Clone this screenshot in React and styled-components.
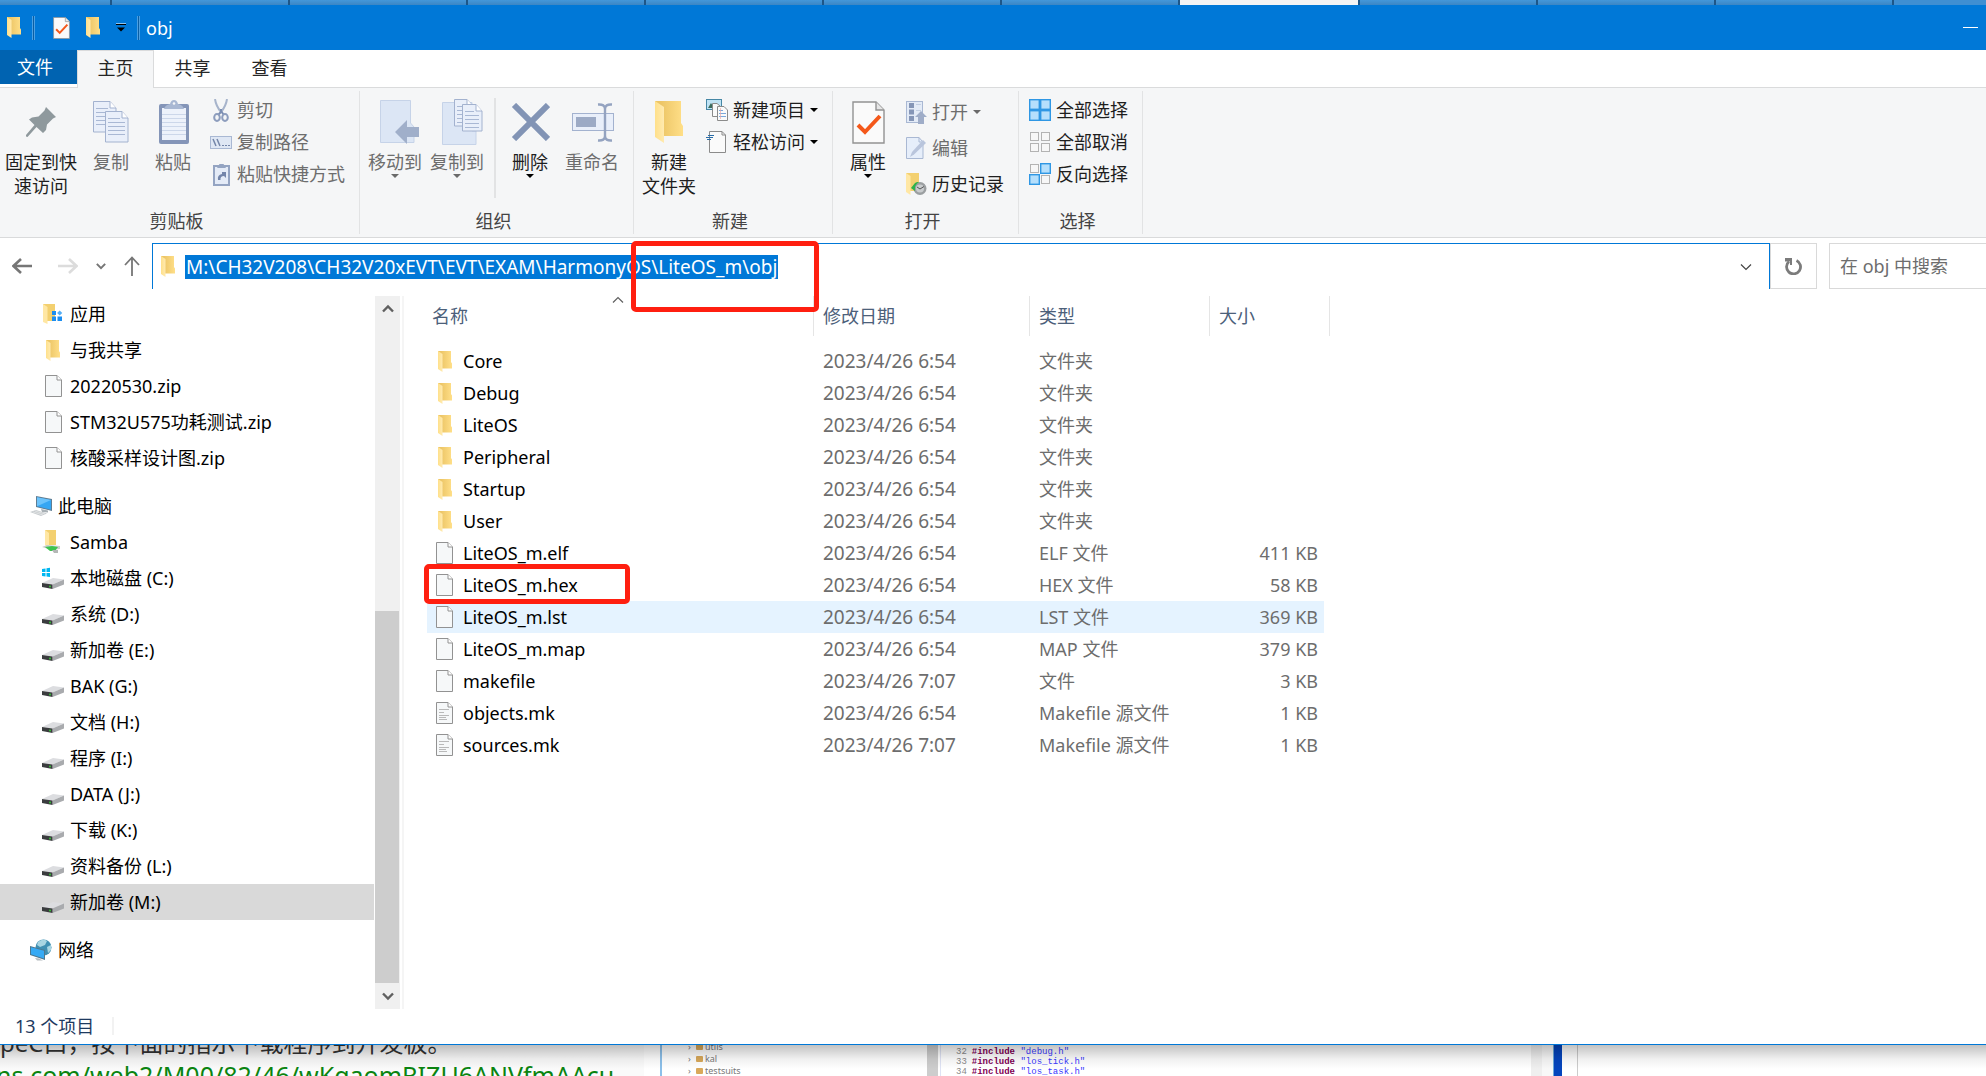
import React, { useState } from "react";
import styled, { createGlobalStyle } from "styled-components";

const GlobalStyle = createGlobalStyle`
  * {
    box-sizing: border-box;
  }
  body {
    margin: 0;
    font-family: "Noto Sans", "Noto Sans CJK SC", sans-serif;
    font-size: 18px;
    line-height: 24px;
    color: #000;
  }
  button, input {
    font: inherit;
    color: inherit;
    border: none;
    padding: 0;
    margin: 0;
    background: none;
  }
  svg {
    display: block;
    flex: none;
  }
`;

/* ---------- icons ---------- */

const FolderIcon = ({ size = 14 }) => (
  <svg width={size} height={size * 1.5} viewBox="0 0 28 42">
    <defs>
      <linearGradient id="folderBack" x1="0" x2="1">
        <stop offset="0.2" stopColor="#ecc566" />
        <stop offset="1" stopColor="#ffdf88" />
      </linearGradient>
      <linearGradient id="folderLeaf" x1="0" x2="1">
        <stop offset="0" stopColor="#ffe08a" />
        <stop offset="1" stopColor="#ffeab0" />
      </linearGradient>
    </defs>
    <path d="M0 0H26V22L28 25V35H4Z" fill="url(#folderBack)" />
    <path d="M0 0L9 6V42L0 36Z" fill="url(#folderLeaf)" />
  </svg>
);

const FileIcon = ({ lines }) => (
  <svg width="17" height="22" viewBox="0 0 17 22">
    <path d="M.5 .5H12L16.500 5V21.500H.5Z" fill="#f6f8f9" stroke="#929292" />
    <path d="M12 .5V5H16.500" fill="#fff" stroke="#929292" />
    {lines && (
      <path d="M3 7.500H13M3 10.500H8M3 13.500H13M3 15.500H10M3 17.500H11" stroke="#b9b9b9" />
    )}
  </svg>
);

const CheckDocIcon = ({ size = 17 }) => (
  <svg width={size} height={Math.round(size * 1.3)} viewBox="0 0 33 43">
    <path d="M1 1H24L32 9V42H1Z" fill="#fafafa" stroke="#929292" strokeWidth="1.400" />
    <path d="M24 1V9H32" fill="#e6e6e6" stroke="#929292" strokeWidth="1.400" />
    <path d="M6 24L13 31L28 15" fill="none" stroke="#f4581a" strokeWidth="4" />
  </svg>
);

const DriveIcon = ({ system }) => (
  <svg width="22" height="22" viewBox="0 0 22 22">
    <path d="M0 16L11 11L22 12.500L10.500 17.500Z" fill="#dcdde0" />
    <path d="M10.500 17.500L22 12.500V17.500L10.500 22Z" fill="#a9abae" />
    <path d="M0 16L10.500 17.500V22L0 20Z" fill="#3a3c3e" />
    <circle cx="8" cy="19.500" r="1" fill="#35c435" />
    {system && (
      <path d="M0 2L3.500 1.500V5H0ZM4.500 1.300L8 .8V5H4.500ZM0 6H3.500V9.400L0 9ZM4.500 6H8V10L4.500 9.500Z" fill="#00b7f1" />
    )}
  </svg>
);

const AppFolderIcon = () => (
  <svg width="20" height="20" viewBox="0 0 20 20">
    <path d="M0 0H12V17H2Z" fill="#f3d070" />
    <path d="M0 0L4.500 3V20L0 18Z" fill="#ffe7a4" />
    <path d="M9 7H13V11H9ZM9 12.500H13V17H9ZM14.500 12.500H19V17H14.500Z" fill="#1b8df0" />
    <path d="M16.700 6.400L19.300 9L16.700 11.600L14.100 9Z" fill="#55aef5" />
  </svg>
);

const NetFolderIcon = () => (
  <svg width="22" height="24" viewBox="0 0 22 24">
    <path d="M3 0H14V15H5Z" fill="#f3d070" />
    <path d="M3 0L7 3V18L3 15Z" fill="#ffe7a4" />
    <path d="M0 17L5 15L18 16V19L10 20Z" fill="#c9ccca" />
    <path d="M3 17L10 16L16 17L13 21L8 21Z" fill="#3cc450" />
    <path d="M10 20L16 20V23H12Z" fill="#b4b8b6" />
  </svg>
);

const ComputerIcon = () => (
  <svg width="22" height="22" viewBox="0 0 22 22">
    <path d="M6 1L22 4V16L6 12Z" fill="#5f7d93" />
    <path d="M7 2.200L21 5V14.700L7 11.200Z" fill="#35a6f3" />
    <path d="M7 2.200L21 5L7 11.200Z" fill="#6cc3fb" />
    <path d="M11 14L18 15.500V17.500L12 17Z" fill="#a8b0b5" />
    <path d="M0 17L6 15L17 18.500L11 21Z" fill="#c6cbce" />
    <path d="M3 17L13 20M5 16L15 19" stroke="#f2f2f2" strokeWidth=".6" />
  </svg>
);

const NetworkIcon = () => (
  <svg width="22" height="22" viewBox="0 0 22 22">
    <circle cx="13.500" cy="8.500" r="8" fill="#3f8fb2" />
    <path d="M8 3Q13 -1 17 2L15 6L10 8L7 6ZM17 8L21 6L21 11L18 14Z" fill="#a8d5e2" />
    <path d="M0 7L15 11V21L0 16Z" fill="#4d7890" />
    <path d="M1 8.200L14 11.800V19.600L1 15.300Z" fill="#36aaf5" />
    <path d="M5 19L9 19.500L13 21.500H7Z" fill="#b5bcc0" />
  </svg>
);

const PinIcon = () => (
  <svg width="30" height="30" viewBox="0 0 30 30">
    <path d="M20 0L30 10L27 11.500L21 17.500L20 23L17 26L10.500 20L1.500 30L0 29.500L0 28L8.500 18L3 12.500L6 10.500L12.500 9.500L18.500 3.500Z" fill="#8f999d" />
  </svg>
);

const Sheet = ({ x, y, w = 23, h = 31 }) => (
  <g transform={`translate(${x} ${y})`}>
    <path d={`M.5 .5H${w - 6}L${w} 7V${h}H.5Z`} fill="#e9effa" stroke="#a3b2cf" />
    <path d={`M${w - 6} .5V7H${w}`} fill="#fff" stroke="#a3b2cf" />
    <path
      d={`M3 7.500H${w - 8}M3 11.500H${w - 3}M3 15.500H${w - 3}M3 19.500H${w - 3}M3 23.500H${w - 3}`}
      stroke="#a9b8d4"
    />
  </g>
);

const CopyIcon = () => (
  <svg width="38" height="43" viewBox="-1 0 38 43">
    <Sheet x={0} y={0} />
    <Sheet x={12} y={10} />
  </svg>
);

const PasteIcon = () => (
  <svg width="32" height="44" viewBox="-2 0 32 44">
    <rect y="4" width="30" height="40" rx="2" fill="#8495b8" />
    <rect x="3" y="8" width="24" height="32" fill="#edf2fb" />
    <path d="M3 14.500H27M3 18.500H27M3 22.500H27M3 26.500H27M3 30.500H27M3 34.500H27" stroke="#ccd7ea" />
    <path d="M5 9Q6 5 11 4Q12 0 15 0T19 4Q24 5 25 9Z" fill="#a9b8d3" />
    <circle cx="15" cy="3.500" r="1.300" fill="#f5f6f8" />
  </svg>
);

const CutIcon = () => (
  <svg width="16" height="23" viewBox="0 0 16 23">
    <path d="M2 0Q3 7 8 13Q13 7 14 0" fill="none" stroke="#a7b4cb" strokeWidth="2" />
    <path d="M8 10V13L5 16M8 12L11 16" fill="none" stroke="#7d8fb3" strokeWidth="2" />
    <ellipse cx="4" cy="18.500" rx="2.800" ry="3.400" fill="none" stroke="#8d9dbd" strokeWidth="2" />
    <ellipse cx="12" cy="18.500" rx="2.800" ry="3.400" fill="none" stroke="#8d9dbd" strokeWidth="2" />
  </svg>
);

const PathIcon = () => (
  <svg width="22" height="13" viewBox="0 0 22 13">
    <rect x=".5" y=".5" width="21" height="12" fill="#dfe7f4" stroke="#a9b8d3" />
    <path d="M3 3L6 10M7 3L10 10" stroke="#7485a8" strokeWidth="1.500" />
    <path d="M12 9.500H14M15 9.500H17M18 9.500H20" stroke="#7485a8" />
  </svg>
);

const PasteLinkIcon = () => (
  <svg width="17" height="23" viewBox="0 0 17 23">
    <rect x="1" y="3" width="15" height="19" fill="#e4ebf7" stroke="#94a4c2" strokeWidth="2" />
    <path d="M4 5L6.500 1H10.500L13 5Z" fill="#94a4c2" />
    <path d="M5 17Q4 12 9 11V9H13V15L11 13Q7 13 7.500 17Z" fill="#7385aa" />
  </svg>
);

const MoveToIcon = () => (
  <svg width="47" height="44" viewBox="-8 0 47 44">
    <path d="M.5 .5H30.500V23L34 27V42.500H.5Z" fill="#dce6f5" stroke="#c6d3e8" />
    <path d="M15 32L27 20V27H39V37H27V44Z" fill="#a0afca" />
  </svg>
);

const CopyToIcon = () => (
  <svg width="51" height="46" viewBox="-10 0 51 46">
    <path d="M.5 3.500H30V32L34 32V45.500H.5Z" fill="#dce6f5" stroke="#c6d3e8" />
    <Sheet x={12} y={0} w={19} h={27} />
    <Sheet x={20} y={5} w={20} h={27} />
  </svg>
);

const DeleteIcon = () => (
  <svg width="40" height="38" viewBox="-2 0 40 38">
    <path d="M2 2L36 36M36 2L2 36" stroke="#8294b5" strokeWidth="6" />
  </svg>
);

const RenameIcon = () => (
  <svg width="44" height="39" viewBox="-2 0 44 39">
    <rect x=".5" y="10.500" width="41" height="17" fill="#e9effa" stroke="#a3b2cf" />
    <rect x="4" y="14" width="20" height="10" fill="#9caac5" />
    <path d="M26 1.500Q33 1 33 6V33Q33 38 26 37.500M40 1.500Q33 1 33 6V33Q33 38 40 37.500" fill="none" stroke="#94a3c0" strokeWidth="2.400" />
  </svg>
);

const NewItemIcon = () => (
  <svg width="22" height="22" viewBox="0 0 22 22">
    <rect x=".5" y=".5" width="15" height="10" fill="#bfe3f5" stroke="#4687a5" />
    <path d="M2 9L5 4L8 9Z" fill="#3c6b5c" />
    <path d="M6.500 4.500H11L14 7V17.500H6.500Z" fill="#fafafa" stroke="#8b8b8b" />
    <path d="M11.500 7.500H18L21.500 11V21.500H11.500Z" fill="#fafafa" stroke="#8b8b8b" />
    <path d="M13 11.500H17M13 14.500H20M13 17.500H20" stroke="#7aa7da" />
    <path d="M14.500 9V20" stroke="#e9a9a9" strokeWidth=".7" />
  </svg>
);

const EasyAccessIcon = () => (
  <svg width="22" height="22" viewBox="0 0 22 22">
    <path d="M3.500 .5H16L19.500 4V21.500H3.500Z" fill="#fafafa" stroke="#8b8b8b" />
    <path d="M16 .5V4H19.500" fill="none" stroke="#8b8b8b" />
    <path d="M2 4.500H8M0 6.500H7M1 8.500H5" stroke="#2a6da8" strokeWidth="1.200" />
  </svg>
);

const OpenIcon = () => (
  <svg width="22" height="23" viewBox="-1 0 22 23">
    <rect x=".5" y=".5" width="16" height="21" fill="#e3ebf7" stroke="#a9b8d3" />
    <path d="M3 2H8V7H3ZM3 8.500H8V13.500H3ZM3 15H8V20H3Z" fill="#8596b7" />
    <path d="M10 3.500H15M10 9.500H15" stroke="#c3cfe3" />
    <path d="M15 10L21 16H18V23H12V16H9Z" fill="#9fadc8" />
  </svg>
);

const EditIcon = () => (
  <svg width="22" height="22" viewBox="-1 0 22 22">
    <path d="M.5 .5H13L17 5V21.500H.5Z" fill="#e6eefa" stroke="#a9b8d3" />
    <path d="M13 .5V5H17" fill="none" stroke="#a9b8d3" />
    <path d="M4 20L6 15L17 3L20 6L8 17.500Z" fill="#b9c5dc" />
  </svg>
);

const HistoryIcon = () => (
  <svg width="22" height="22" viewBox="0 0 22 22">
    <path d="M1 0H14V18H4Z" fill="#f3d070" />
    <path d="M1 0L5.500 3V22L1 19Z" fill="#ffe7a4" />
    <circle cx="15" cy="15.500" r="6.500" fill="#9b9fa1" />
    <circle cx="15" cy="15.500" r="4" fill="#c9ccce" />
    <path d="M12 14L15 16L19 13.500" fill="none" stroke="#555" />
    <path d="M6 15L10 10Q12 8.500 14 9Q9 12 10 18Z" fill="#2cb34a" />
  </svg>
);

const SelectIcon = ({ on }) => (
  <svg width="22" height="22" viewBox="0 0 22 22">
    {[[0, 0], [11, 0], [0, 11], [11, 11]].map(([x, y], i) =>
      on[i] ? (
        <rect key={i} x={x + 0.7} y={y + 0.7} width="9.600" height="9.600" fill="#b5dffc" stroke="#2f97e4" strokeWidth="1.400" />
      ) : (
        <rect key={i} x={x + 1.5} y={y + 1.5} width="8" height="8" fill="#f7f7f7" stroke="#b3b3b3" />
      )
    )}
  </svg>
);

const Caret = ({ color = "#000" }) => (
  <svg width="8" height="4" viewBox="0 0 8 4">
    <path d="M0 0H8L4 4Z" fill={color} />
  </svg>
);

const Chevron = ({ up, size = 12, color = "#606060", width = 1.5 }) => (
  <svg width={size} height={size} viewBox="0 0 12 12">
    <path d={up ? "M1 8.500L6 3.500L11 8.500" : "M1 3.500L6 8.500L11 3.500"} fill="none" stroke={color} strokeWidth={width} />
  </svg>
);

const ArrowIcon = ({ right, color }) => (
  <svg width="20" height="16" viewBox="0 0 20 16">
    <path
      d={right ? "M0 8H18M11 1L18.500 8L11 15" : "M20 8H2M9 1L1.500 8L9 15"}
      fill="none"
      stroke={color}
      strokeWidth="2.600"
    />
  </svg>
);

const UpIcon = () => (
  <svg width="16" height="20" viewBox="0 0 16 20">
    <path d="M8 20V1.500M1 9L8 1.500L15 9" fill="none" stroke="#767676" strokeWidth="1.800" />
  </svg>
);

const RefreshIcon = () => (
  <svg width="17" height="17" viewBox="0 0 17 17">
    <path d="M11.500 2.500A7 7 0 1 1 4 3.500" fill="none" stroke="#7b7b7b" strokeWidth="2.800" />
    <path d="M0 0H7V7H5V3.500H0Z" fill="#7b7b7b" />
  </svg>
);

/* ---------- data ---------- */

const quickAccess = [
  { name: "应用", icon: <AppFolderIcon /> },
  { name: "与我共享", icon: <FolderIcon /> },
  { name: "20220530.zip", icon: <FileIcon /> },
  { name: "STM32U575功耗测试.zip", icon: <FileIcon /> },
  { name: "核酸采样设计图.zip", icon: <FileIcon /> },
];

const drives = [
  { name: "Samba", icon: <NetFolderIcon /> },
  { name: "本地磁盘 (C:)", icon: <DriveIcon system /> },
  { name: "系统 (D:)", icon: <DriveIcon /> },
  { name: "新加卷 (E:)", icon: <DriveIcon /> },
  { name: "BAK (G:)", icon: <DriveIcon /> },
  { name: "文档 (H:)", icon: <DriveIcon /> },
  { name: "程序 (I:)", icon: <DriveIcon /> },
  { name: "DATA (J:)", icon: <DriveIcon /> },
  { name: "下载 (K:)", icon: <DriveIcon /> },
  { name: "资料备份 (L:)", icon: <DriveIcon /> },
  { name: "新加卷 (M:)", icon: <DriveIcon /> },
];

const files = [
  { name: "Core", date: "2023/4/26 6:54", type: "文件夹", folder: true },
  { name: "Debug", date: "2023/4/26 6:54", type: "文件夹", folder: true },
  { name: "LiteOS", date: "2023/4/26 6:54", type: "文件夹", folder: true },
  { name: "Peripheral", date: "2023/4/26 6:54", type: "文件夹", folder: true },
  { name: "Startup", date: "2023/4/26 6:54", type: "文件夹", folder: true },
  { name: "User", date: "2023/4/26 6:54", type: "文件夹", folder: true },
  { name: "LiteOS_m.elf", date: "2023/4/26 6:54", type: "ELF 文件", size: "411 KB" },
  { name: "LiteOS_m.hex", date: "2023/4/26 6:54", type: "HEX 文件", size: "58 KB", marked: true },
  { name: "LiteOS_m.lst", date: "2023/4/26 6:54", type: "LST 文件", size: "369 KB" },
  { name: "LiteOS_m.map", date: "2023/4/26 6:54", type: "MAP 文件", size: "379 KB" },
  { name: "makefile", date: "2023/4/26 7:07", type: "文件", size: "3 KB" },
  { name: "objects.mk", date: "2023/4/26 6:54", type: "Makefile 源文件", size: "1 KB", lines: true },
  { name: "sources.mk", date: "2023/4/26 7:07", type: "Makefile 源文件", size: "1 KB", lines: true },
];

const browserTabs = [0, 1, 2, 3, 4, 5, 6, 7, 8, 9, 10];

/* ---------- components ---------- */

function BigAction({ icon, label, caret, disabled, wide }) {
  return (
    <BigButton $wide={wide} $dim={disabled}>
      <BigIcon>{icon}</BigIcon>
      {label.map((line) => (
        <span key={line}>{line}</span>
      ))}
      {caret && <Caret color={disabled ? "#6a6a6a" : "#000"} />}
    </BigButton>
  );
}

function SmallAction({ icon, label, caret, disabled }) {
  return (
    <SmallButton $dim={disabled}>
      <IconSlot>{icon}</IconSlot>
      {label}
      {caret && <Caret color={disabled ? "#6a6a6a" : "#000"} />}
    </SmallButton>
  );
}

function Ribbon() {
  return (
    <RibbonBar>
      <Group $width={360}>
        <GroupBody>
          <BigAction wide icon={<PinIcon />} label={["固定到快", "速访问"]} />
          <BigAction disabled icon={<CopyIcon />} label={["复制"]} />
          <BigAction disabled icon={<PasteIcon />} label={["粘贴"]} />
          <Stack>
            <SmallAction disabled icon={<CutIcon />} label="剪切" />
            <SmallAction disabled icon={<PathIcon />} label="复制路径" />
            <SmallAction disabled icon={<PasteLinkIcon />} label="粘贴快捷方式" />
          </Stack>
        </GroupBody>
        <GroupLabel>剪贴板</GroupLabel>
      </Group>
      <Group $width={274}>
        <GroupBody>
          <BigAction disabled caret icon={<MoveToIcon />} label={["移动到"]} />
          <BigAction disabled caret icon={<CopyToIcon />} label={["复制到"]} />
          <Divider />
          <BigAction caret icon={<DeleteIcon />} label={["删除"]} />
          <BigAction disabled icon={<RenameIcon />} label={["重命名"]} />
        </GroupBody>
        <GroupLabel>组织</GroupLabel>
      </Group>
      <Group $width={199}>
        <GroupBody>
          <BigAction icon={<FolderIcon size={28} />} label={["新建", "文件夹"]} />
          <Stack>
            <SmallAction caret icon={<NewItemIcon />} label="新建项目" />
            <SmallAction caret icon={<EasyAccessIcon />} label="轻松访问" />
          </Stack>
        </GroupBody>
        <GroupLabel>新建</GroupLabel>
      </Group>
      <Group $width={186}>
        <GroupBody>
          <BigAction caret icon={<CheckDocIcon size={33} />} label={["属性"]} />
          <Stack $row={36}>
            <SmallAction disabled caret icon={<OpenIcon />} label="打开" />
            <SmallAction disabled icon={<EditIcon />} label="编辑" />
            <SmallAction icon={<HistoryIcon />} label="历史记录" />
          </Stack>
        </GroupBody>
        <GroupLabel>打开</GroupLabel>
      </Group>
      <Group $width={124}>
        <GroupBody>
          <Stack>
            <SmallAction icon={<SelectIcon on={[1, 1, 1, 1]} />} label="全部选择" />
            <SmallAction icon={<SelectIcon on={[0, 0, 0, 0]} />} label="全部取消" />
            <SmallAction icon={<SelectIcon on={[0, 1, 1, 0]} />} label="反向选择" />
          </Stack>
        </GroupBody>
        <GroupLabel>选择</GroupLabel>
      </Group>
    </RibbonBar>
  );
}

function Sidebar() {
  const [selected, setSelected] = useState("新加卷 (M:)");

  const renderItem = (item, root) => (
    <TreeItem
      key={item.name}
      href="#"
      $root={root}
      $active={item.name === selected}
      onClick={() => setSelected(item.name)}
    >
      <IconSlot>{item.icon}</IconSlot>
      {item.name}
    </TreeItem>
  );

  return (
    <SidebarPane>
      <Tree>
        <TreeSection>{quickAccess.map((item) => renderItem(item))}</TreeSection>
        <TreeSection>
          {renderItem({ name: "此电脑", icon: <ComputerIcon /> }, true)}
          {drives.map((item) => renderItem(item))}
        </TreeSection>
        <TreeSection>{renderItem({ name: "网络", icon: <NetworkIcon /> }, true)}</TreeSection>
      </Tree>
      <Scrollbar>
        <ScrollButton aria-label="Scroll up">
          <Chevron up width={2.4} />
        </ScrollButton>
        <ScrollGap />
        <ScrollThumb />
        <ScrollButton aria-label="Scroll down">
          <Chevron width={2.4} />
        </ScrollButton>
      </Scrollbar>
    </SidebarPane>
  );
}

function FileList() {
  const [active, setActive] = useState("LiteOS_m.lst");

  return (
    <FilePane>
      <FileTable>
        <colgroup>
          <NameCol />
          <DateCol />
          <TypeCol />
          <SizeCol />
        </colgroup>
        <thead>
          <tr>
            <HeadCell $first>
              <SortMark>
                <Chevron up width={1.2} />
              </SortMark>
              名称
            </HeadCell>
            <HeadCell>修改日期</HeadCell>
            <HeadCell>类型</HeadCell>
            <HeadCell>大小</HeadCell>
          </tr>
        </thead>
        <tbody>
          {files.map((file) => (
            <FileRow key={file.name} $active={file.name === active} onClick={() => setActive(file.name)}>
              <NameCell>
                <NameWrap>
                  <FileSlot>{file.folder ? <FolderIcon /> : <FileIcon lines={file.lines} />}</FileSlot>
                  {file.name}
                </NameWrap>
                {file.marked && <RowMark />}
              </NameCell>
              <DateCell>{file.date}</DateCell>
              <Cell>{file.type}</Cell>
              <SizeCell>{file.size}</SizeCell>
            </FileRow>
          ))}
        </tbody>
      </FileTable>
    </FilePane>
  );
}

function Backdrop() {
  return (
    <BackdropBar>
      <Article>
        <ArticleText>peC口，按下面的指示下载程序到开发板。</ArticleText>
        <ArticleLink href="#">ns.com/web2/M00/82/46/wKgaomRIZU6ANVfmAAcu-</ArticleLink>
      </Article>
      <ProjectTree>
        {["utils", "kal", "testsuits"].map((name) => (
          <ProjectItem key={name}>
            <Arrow>›</Arrow>
            <MiniFolder />
            {name}
          </ProjectItem>
        ))}
      </ProjectTree>
      <GreyStrip />
      <Editor>
        {[
          [32, "debug.h"],
          [33, "los_tick.h"],
          [34, "los_task.h"],
        ].map(([no, header]) => (
          <CodeLine key={no}>
            <LineNo>{no}</LineNo>
            <Keyword>#include</Keyword> "{header}"
          </CodeLine>
        ))}
      </Editor>
      <PaleStrip />
      <BlueStrip />
      <BlankPage />
    </BackdropBar>
  );
}

function App() {
  const [path, setPath] = useState("M:\\CH32V208\\CH32V20xEVT\\EVT\\EXAM\\HarmonyOS\\LiteOS_m\\obj");
  const [search, setSearch] = useState("");

  return (
    <Desktop>
      <GlobalStyle />
      <TabStrip>
        {browserTabs.map((tab) => (
          <StripTab key={tab} $first={tab === 0} $active={tab === 7} />
        ))}
      </TabStrip>
      <TitleBar>
        <FolderIcon />
        <TitleDivider $wide />
        <CheckDocIcon />
        <FolderIcon />
        <svg width="10" height="9" viewBox="0 0 10 9">
          <path d="M0 .5H10" stroke="#8fc3ee" />
          <path d="M0 1.500H10" stroke="#000" />
          <path d="M1 4.500H9L5 8.500Z" fill="#000" />
        </svg>
        <TitleDivider />
        <Title>obj</Title>
        <MinimizeButton aria-label="Minimize" />
      </TitleBar>
      <Tabs>
        <FileTab>文件</FileTab>
        <Tab $active>主页</Tab>
        <Tab>共享</Tab>
        <Tab>查看</Tab>
      </Tabs>
      <Ribbon />
      <AddressRow>
        <NavButtons>
          <button aria-label="Back"><ArrowIcon color="#767676" /></button>
          <ForwardButton aria-label="Forward"><ArrowIcon right color="#dcdcdc" /></ForwardButton>
          <button aria-label="Recent"><Chevron size={10} width={2.4} color="#767676" /></button>
          <button aria-label="Up"><UpIcon /></button>
        </NavButtons>
        <AddressBox>
          <FolderIcon />
          <PathInput aria-label="Address" value={path} onChange={(e) => setPath(e.target.value)} />
          <DropButton aria-label="History">
            <Chevron width={1.2} color="#444" />
          </DropButton>
          <PathMark />
        </AddressBox>
        <RefreshButton aria-label="Refresh">
          <RefreshIcon />
        </RefreshButton>
        <SearchInput
          aria-label="Search"
          placeholder="在 obj 中搜索"
          value={search}
          onChange={(e) => setSearch(e.target.value)}
        />
      </AddressRow>
      <Main>
        <Sidebar />
        <FileList />
      </Main>
      <StatusBar>
        <StatusText>13 个项目</StatusText>
      </StatusBar>
      <Backdrop />
    </Desktop>
  );
}

export default App;

/* ---------- styles ---------- */

const Desktop = styled.div`
  display: flex;
  flex-direction: column;
  height: 100vh;
  overflow: hidden;
  background: #fff;
`;

const TabStrip = styled.div`
  display: flex;
  flex: none;
  height: 5px;
  overflow: hidden;
  background: #3f8fd2;
`;

const StripTab = styled.div`
  flex: none;
  width: ${(p) => (p.$first ? 112 : p.$active ? 180 : 178)}px;
  border-right: 2px solid #1d5688;
  background: ${(p) => (p.$active ? "#f4f4f4" : "linear-gradient(#4397da, #3b86c4)")};
`;

const TitleBar = styled.header`
  display: flex;
  flex: none;
  align-items: center;
  gap: 16px;
  height: 45px;
  padding: 0 8px 0 7px;
  background: #0078d7;
  color: #fff;
`;

const TitleDivider = styled.div`
  width: 3px;
  height: 24px;
  margin: 0 ${(p) => (p.$wide ? 2 : 0)}px 0 -5px;
  border: solid #4ba0e3;
  border-width: 0 1px;
  background: #0a5ea3;
`;

const Title = styled.span`
  margin-left: -10px;
`;

const MinimizeButton = styled.button`
  width: 15px;
  height: 1px;
  margin-left: auto;
  background: #fff;
`;

const Tabs = styled.nav`
  display: flex;
  flex: none;
  height: 38px;
  border-bottom: 1px solid #dadbdc;
`;

const Tab = styled.button`
  width: 77px;
  height: 38px;
  padding-bottom: 3px;
  color: #262626;
  border: solid ${(p) => (p.$active ? "#dadbdc" : "transparent")};
  border-width: 1px 1px 0;
  background: ${(p) => (p.$active ? "#f5f6f7" : "none")};
`;

const FileTab = styled.button`
  width: 77px;
  height: 34px;
  padding-right: 7px;
  background: #0063b1;
  color: #fff;
`;

const RibbonBar = styled.div`
  display: flex;
  flex: none;
  height: 150px;
  padding: 3px 0;
  background: #f5f6f7;
  border-bottom: 1px solid #d9dadb;
`;

const Group = styled.section`
  display: flex;
  flex: none;
  flex-direction: column;
  justify-content: space-between;
  width: ${(p) => p.$width}px;
  border-right: 1px solid #e2e3e4;
`;

const GroupBody = styled.div`
  display: flex;
  padding: 3px 0 0 4px;
`;

const GroupLabel = styled.div`
  text-align: center;
  color: #444;
  padding: 0 6px 1px 0;
`;

const BigButton = styled.button`
  display: flex;
  flex: none;
  flex-direction: column;
  align-items: center;
  width: ${(p) => (p.$wide ? 76 : 62)}px;
  padding-right: ${(p) => (p.$wide ? 2 : 0)}px;
  white-space: nowrap;
  color: ${(p) => (p.$dim ? "#6d6d6d" : "#1e1e1e")};
`;

const BigIcon = styled.span`
  display: flex;
  align-items: center;
  height: 56px;
`;

const Stack = styled.div`
  display: grid;
  grid-auto-rows: ${(p) => p.$row || 32}px;
  align-content: start;
  padding-left: 6px;
`;

const SmallButton = styled.button`
  display: flex;
  align-items: center;
  gap: 5px;
  white-space: nowrap;
  color: ${(p) => (p.$dim ? "#6d6d6d" : "#1e1e1e")};
`;

const IconSlot = styled.span`
  display: flex;
  flex: none;
  justify-content: center;
  width: 22px;
`;

const Divider = styled.div`
  width: 2px;
  height: 100px;
  margin: 4px 3px 0 6px;
  background: #e2e3e4;
`;

const AddressRow = styled.div`
  display: flex;
  flex: none;
  height: 58px;
  padding: 5px 0 7px;
`;

const NavButtons = styled.div`
  display: flex;
  align-items: center;
  gap: 18px;
  width: 152px;
  padding-left: 12px;
`;

const ForwardButton = styled.button`
  margin-left: 8px;
`;

const AddressBox = styled.div`
  position: relative;
  display: flex;
  flex: 1;
  align-items: center;
  gap: 10px;
  padding: 0 17px 0 8px;
  border: solid #0078d7;
  border-width: 1px 1px 0;
`;

const PathInput = styled.input`
  field-sizing: content;
  height: 24px;
  padding: 0 1px;
  outline: none;
  font-size: 19px;
  background: #0078d7;
  color: #fff;
`;

const DropButton = styled.button`
  margin-left: auto;
`;

const RefreshButton = styled.button`
  display: flex;
  align-items: center;
  justify-content: center;
  width: 47px;
  border: 1px solid #d9d9d9;
`;

const SearchInput = styled.input`
  width: 157px;
  margin-left: 12px;
  padding-left: 10px;
  border: solid #d9d9d9;
  border-width: 1px 0 1px 1px;
  outline: none;
  &::placeholder {
    color: #6d6d6d;
  }
`;

const Mark = styled.div`
  position: absolute;
  z-index: 2;
  border: 5px solid #ff1f10;
  border-radius: 5px;
  pointer-events: none;
`;

const PathMark = styled(Mark)`
  left: 478px;
  top: -3px;
  width: 188px;
  height: 71px;
`;

const RowMark = styled(Mark)`
  left: -3px;
  top: -5px;
  width: 206px;
  height: 40px;
`;

const Main = styled.main`
  display: flex;
  flex: 1;
  min-height: 0;
`;

const SidebarPane = styled.aside`
  display: flex;
  flex: none;
  border-right: 2px solid #f5f5f5;
`;

const Tree = styled.nav`
  width: 374px;
  margin-right: 1px;
  overflow: hidden;
`;

const TreeSection = styled.div`
  margin-bottom: 12px;
`;

const TreeItem = styled.a`
  display: flex;
  align-items: center;
  gap: 6px;
  height: 36px;
  padding-left: ${(p) => (p.$root ? 30 : 42)}px;
  text-decoration: none;
  color: #000;
  background: ${(p) => (p.$active ? "#d9d9d9" : "none")};
`;

const Scrollbar = styled.div`
  display: flex;
  flex-direction: column;
  width: 25px;
  margin-right: 2px;
  background: #f0f0f0;
`;

const ScrollButton = styled.button`
  display: flex;
  align-items: center;
  justify-content: center;
  height: 26px;
`;

const ScrollGap = styled.div`
  flex: 289;
`;

const ScrollThumb = styled.div`
  flex: 372;
  margin-right: 1px;
  background: #cdcdcd;
`;

const FilePane = styled.section`
  flex: 1;
  padding-left: 23px;
`;

const FileTable = styled.table`
  table-layout: fixed;
  width: 903px;
  border-collapse: separate;
  border-spacing: 0;
  thead::after {
    content: "";
    display: block;
    height: 9px;
  }
`;

const NameCol = styled.col`
  width: 387px;
`;

const DateCol = styled.col`
  width: 216px;
`;

const TypeCol = styled.col`
  width: 180px;
`;

const SizeCol = styled.col`
  width: 120px;
`;

const HeadCell = styled.th`
  position: relative;
  height: 40px;
  padding: 0 0 0 ${(p) => (p.$first ? 5 : 9)}px;
  border-right: 1px solid #e5e5e5;
  text-align: left;
  font-weight: 400;
  color: #4c607a;
`;

const SortMark = styled.span`
  position: absolute;
  top: -2px;
  left: 50%;
  margin-left: -8px;
`;

const Cell = styled.td`
  height: 32px;
  padding: 0 0 0 9px;
  white-space: nowrap;
  color: #6d6d6d;
`;

const DateCell = styled(Cell)`
  font-size: 19px;
`;

const NameCell = styled(Cell)`
  position: relative;
  color: #000;
`;

const NameWrap = styled.div`
  display: flex;
  align-items: center;
  gap: 10px;
`;

const FileSlot = styled(IconSlot)`
  width: 17px;
`;

const SizeCell = styled(Cell)`
  padding-right: 6px;
  border-right: 6px solid #fff;
  text-align: right;
`;

const FileRow = styled.tr`
  background: ${(p) => (p.$active ? "#e5f3ff" : "none")};
`;

const StatusBar = styled.footer`
  display: flex;
  flex: none;
  align-items: center;
  height: 36px;
  padding: 0 0 2px 15px;
  border-bottom: 1px solid #0078d7;
  color: #1e3a5f;
`;

const StatusText = styled.span`
  padding-right: 18px;
  border-right: 2px solid #f2f2f2;
  line-height: 18px;
`;

const BackdropBar = styled.div`
  position: relative;
  display: flex;
  flex: none;
  height: 31px;
  overflow: hidden;
  background: #fff;
  &::after {
    content: "";
    position: absolute;
    inset: 0;
    background: linear-gradient(rgba(0, 0, 0, 0.24), rgba(0, 0, 0, 0.06) 14px, transparent 24px);
  }
`;

const Article = styled.div`
  flex: none;
  width: 644px;
  height: 64px;
  margin: -18px 16px 0 0;
  background: #fafafa;
  white-space: nowrap;
  line-height: 32px;
`;

const ArticleText = styled.div`
  font-size: 24px;
  color: #333;
`;

const ArticleLink = styled.a`
  display: block;
  margin-left: -4px;
  font-size: 25px;
  color: #0a8410;
  text-decoration: none;
`;

const ProjectTree = styled.div`
  flex: none;
  width: 267px;
  padding-left: 26px;
  border-left: 2px solid #8cc0ea;
`;

const ProjectItem = styled.div`
  display: flex;
  align-items: center;
  gap: 2px;
  height: 12px;
  margin-top: -4px;
  margin-bottom: 4px;
  font-size: 9px;
  color: #777;
`;

const Arrow = styled.span`
  width: 6px;
`;

const MiniFolder = styled.span`
  width: 7px;
  height: 6px;
  border-radius: 1px;
  background: #d9a95a;
`;

const GreyStrip = styled.div`
  flex: none;
  width: 11px;
  background: #cdcdcd;
`;

const Editor = styled.div`
  flex: none;
  width: 591px;
  margin-left: 2px;
  padding: 2px 0 0 15px;
  border-left: 1px solid #dfe3f5;
  font-family: "Liberation Mono", monospace;
  font-size: 9px;
`;

const CodeLine = styled.div`
  height: 10px;
  line-height: 10px;
  white-space: pre;
  color: #3a3aff;
`;

const LineNo = styled.span`
  margin-right: 5px;
  color: #8a8a8a;
`;

const Keyword = styled.b`
  color: #7f0055;
`;

const PaleStrip = styled.div`
  flex: none;
  width: 22px;
  background: linear-gradient(90deg, #efefef 11px, #f8f8f8 11px);
`;

const BlueStrip = styled.div`
  flex: none;
  width: 9px;
  border-left: 1px solid #6ca8d8;
  background: #0545bd;
`;

const BlankPage = styled.div`
  flex: 1;
  margin-left: 15px;
  border-left: 1px solid #ccc;
`;
